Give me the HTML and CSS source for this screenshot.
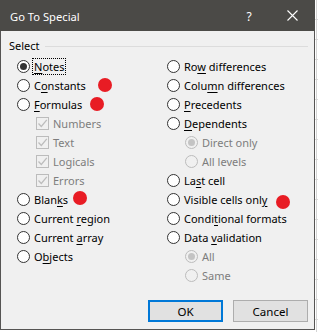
FILE: index.html
```html
<!DOCTYPE html>
<html>
<head>
<meta charset="utf-8">
<link rel="stylesheet" href="styles.css">
</head>
<body>
<div class="page">
  <div class="dialog">
    <div class="titlebar">
      <span class="title">Go To Special</span>
      <span class="help">?</span>
      <span class="close"><svg width="11" height="11" viewBox="0 0 11 11"><path d="M0.5 0.5 L10.5 10.5 M10.5 0.5 L0.5 10.5" stroke="#fff" stroke-width="1.1"/></svg></span>
    </div>
    <div class="content">
      <div class="group-head"><span class="group-label">Select</span><span class="rule"></span></div>
      <div class="cols">
        <div class="col">
          <div class="row"><span class="radio checked"></span><span class="label focus"><u>N</u>otes</span></div>
          <div class="row"><span class="radio"></span><span class="label">C<u>o</u>nstants</span></div>
          <div class="row"><span class="radio"></span><span class="label"><u>F</u>ormulas</span></div>
          <div class="row sub"><span class="check"><svg width="11" height="11" viewBox="0 0 11 11"><path d="M1.5 5.5 L4.3 8.5 L9.8 1.8" fill="none" stroke="#bdbdbd" stroke-width="1.3"/></svg></span><span class="label dis">Numbers</span></div>
          <div class="row sub"><span class="check"><svg width="11" height="11" viewBox="0 0 11 11"><path d="M1.5 5.5 L4.3 8.5 L9.8 1.8" fill="none" stroke="#bdbdbd" stroke-width="1.3"/></svg></span><span class="label dis">Text</span></div>
          <div class="row sub"><span class="check"><svg width="11" height="11" viewBox="0 0 11 11"><path d="M1.5 5.5 L4.3 8.5 L9.8 1.8" fill="none" stroke="#bdbdbd" stroke-width="1.3"/></svg></span><span class="label dis">Logicals</span></div>
          <div class="row sub"><span class="check"><svg width="11" height="11" viewBox="0 0 11 11"><path d="M1.5 5.5 L4.3 8.5 L9.8 1.8" fill="none" stroke="#bdbdbd" stroke-width="1.3"/></svg></span><span class="label dis">Errors</span></div>
          <div class="row"><span class="radio"></span><span class="label">Blan<u>k</u>s</span></div>
          <div class="row"><span class="radio"></span><span class="label">Current <u>r</u>egion</span></div>
          <div class="row"><span class="radio"></span><span class="label">Current <u>a</u>rray</span></div>
          <div class="row"><span class="radio"></span><span class="label">O<u>b</u>jects</span></div>
        </div>
        <div class="col">
          <div class="row"><span class="radio"></span><span class="label">Ro<u>w</u> differences</span></div>
          <div class="row"><span class="radio"></span><span class="label">Colu<u>m</u>n differences</span></div>
          <div class="row"><span class="radio"></span><span class="label"><u>P</u>recedents</span></div>
          <div class="row"><span class="radio"></span><span class="label"><u>D</u>ependents</span></div>
          <div class="row subr"><span class="radio disabled checked"></span><span class="label dis">Direct only</span></div>
          <div class="row subr"><span class="radio disabled"></span><span class="label dis">All levels</span></div>
          <div class="row"><span class="radio"></span><span class="label">La<u>s</u>t cell</span></div>
          <div class="row"><span class="radio"></span><span class="label">Visible cells onl<u>y</u></span></div>
          <div class="row"><span class="radio"></span><span class="label">Condi<u>t</u>ional formats</span></div>
          <div class="row"><span class="radio"></span><span class="label">Data <u>v</u>alidation</span></div>
          <div class="row subr"><span class="radio disabled checked"></span><span class="label dis">All</span></div>
          <div class="row subr"><span class="radio disabled"></span><span class="label dis">Same</span></div>
        </div>
      </div>
      <div class="buttons">
        <button class="btn default">OK</button>
        <button class="btn">Cancel</button>
      </div>
    </div>
    <span class="dot dot-constants"></span>
    <span class="dot dot-formulas"></span>
    <span class="dot dot-blanks"></span>
    <span class="dot dot-visible"></span>
  </div>
</div>
</body>
</html>
```
FILE: styles.css
```css
* { box-sizing: border-box; }
html, body { margin: 0; padding: 0; }
body {
  font-family: "Noto Sans", "Open Sans", sans-serif;
  font-size: 11px;
  color: #000;
  background: #fff;
}
.page {
  width: 318px;
  height: 332px;
  background-color: #fff;
  background-image:
    linear-gradient(to right, transparent 316px, #d4d4d4 316px, #d4d4d4 317px, transparent 317px),
    repeating-linear-gradient(to bottom, transparent 0, transparent 19px, #dadada 19px, #dadada 20px);
}
.dialog {
  position: relative;
  width: 315px;
  height: 330px;
  display: flex;
  flex-direction: column;
  background: #f0f0f0;
  border: 1px solid #555453;
  border-top: none;
}
.titlebar {
  height: 31px;
  margin: 0 -1px;
  background: #4b4a47;
  color: #fff;
  display: flex;
  align-items: center;
  padding-left: 10px;
}
.title { flex: 1; font-size: 11.2px; padding-top: 1px; }
.help {
  width: 44px;
  text-align: center;
  font-size: 12px;
  padding-top: 1px;
}
.close {
  width: 44px;
  display: flex;
  justify-content: center;
  align-items: center;
  padding-right: 1px;
}
.close svg { display: block; }
.content {
  flex: 1;
  display: flex;
  flex-direction: column;
  padding: 6px 6px 7px 7px;
}
.group-head {
  display: flex;
  align-items: center;
  height: 18px;
}
.group-label { line-height: 18px; padding-left: 1px; }
.rule {
  flex: 1;
  height: 1px;
  background: #dcdcdc;
  margin-left: 5px;
}
.cols {
  display: grid;
  grid-template-columns: 150px 1fr;
  margin: 2px 0 0 9px;
}
.col { display: flex; flex-direction: column; }
.row {
  display: flex;
  align-items: center;
  height: 19px;
  gap: 4px;
  white-space: nowrap;
}
.row.sub { padding-left: 19px; gap: 4px; }
.row.subr { padding-left: 18px; }
.label { line-height: 15px; }
.label u { text-decoration-thickness: 1px; text-underline-offset: 2px; }
.label.dis { color: #7d7d7d; }
.label.focus {
  outline: 1px dotted #000;
  padding: 0 1px;
  margin-left: -1px;
}
.radio {
  width: 13px;
  height: 13px;
  flex: none;
  border-radius: 50%;
  border: 1px solid #333;
  background: #fff;
  display: flex;
  align-items: center;
  justify-content: center;
}
.radio.checked::after {
  content: "";
  width: 7px;
  height: 7px;
  border-radius: 50%;
  background: #333;
}
.radio.disabled { border-color: #bcbcbc; background: #f0f0f0; }
.radio.disabled.checked::after { background: #c4c4c4; }
.check {
  width: 13px;
  height: 13px;
  flex: none;
  border: 1px solid #bcbcbc;
  background: #f0f0f0;
  display: flex;
  align-items: center;
  justify-content: center;
}
.check svg { display: block; }
.buttons {
  margin-top: auto;
  display: flex;
  justify-content: flex-end;
  gap: 10px;
}
.btn {
  width: 75px;
  height: 22px;
  font-family: inherit;
  font-size: 11.5px;
  color: #000;
  background: #e1e1e1;
  border: 1px solid #adadad;
  padding: 0;
  margin: 0;
}
.btn.default { border: 2px solid #0078d7; }
.dot {
  position: absolute;
  width: 14px;
  height: 14px;
  border-radius: 50%;
  background: #e81c24;
}
.dot-constants { left: 97px; top: 78px; }
.dot-formulas { left: 89px; top: 97px; }
.dot-blanks { left: 72px; top: 191px; }
.dot-visible { left: 275px; top: 195px; }
```
